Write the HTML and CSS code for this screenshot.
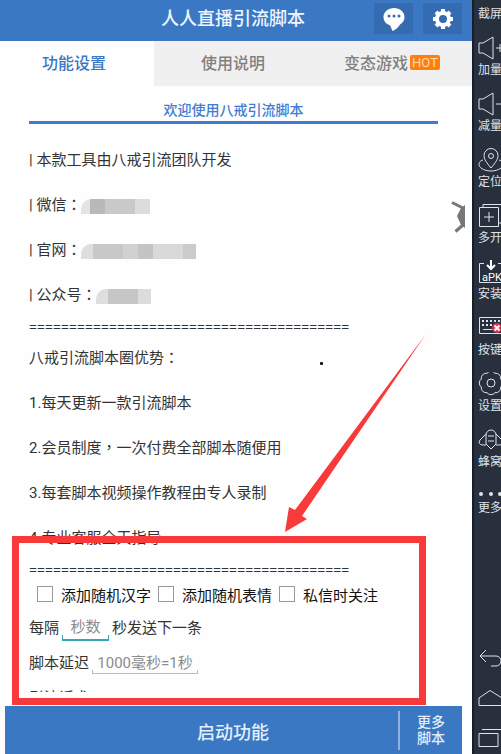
FILE: index.html
```html
<!DOCTYPE html>
<html lang="zh-CN">
	<head>
		<meta charset="utf-8">
		<title>人人直播引流脚本</title>
		<meta name="viewport" content="width=device-width, initial-scale=1.0"/>
		<link rel="stylesheet" href="styles.css">
	</head>
	<body>
		<section class="app">
			<header>
				<h1>人人直播引流脚本</h1>
				<div class="actions">
					<button aria-label="消息">
						<svg width="24" height="26" viewBox="0 0 24 26">
							<path d="M12 2C6 2 1.500 6 1.500 11c0 4 2.500 7 6.500 8.300L10.500 25c3-1 5.500-3.500 7.500-6.500 3-1.700 4.500-4.500 4.500-7.500C22.500 6 18 2 12 2z" fill="#fff"/>
							<g fill="#356bb0"><circle cx="7" cy="10" r="1.500"/><circle cx="12" cy="10" r="1.500"/><circle cx="17" cy="10" r="1.500"/></g>
						</svg>
					</button>
					<button aria-label="设置">
						<svg width="24" height="24" viewBox="-12 -12 24 24" stroke="#fff" fill="none">
							<circle r="6" stroke-width="4"/>
							<path d="M0-7v-3M0 7v3M7 0h3M-7 0h-3M5 5l2 2M-5-5l-2-2M5-5l2-2M-5 5l-2 2" stroke-width="4"/>
						</svg>
					</button>
				</div>
			</header>
			<nav class="tabs">
				<button class="active">功能设置</button>
				<button>使用说明</button>
				<button>变态游戏<span class="hot">HOT</span></button>
			</nav>
			<main>
				<h2>欢迎使用八戒引流脚本</h2>
				<p>| 本款工具由八戒引流团队开发</p>
				<p>| 微信<span class="punct" lang="zh-Hant">：</span><span class="mosaic wechat"></span></p>
				<p>| 官网<span class="punct" lang="zh-Hant">：</span><span class="mosaic site"></span></p>
				<p>| 公众号<span class="punct" lang="zh-Hant">：</span><span class="mosaic account"></span></p>
				<div class="rule">========================================</div>
				<p>八戒引流脚本圈优势<span class="punct" lang="zh-Hant">：</span></p>
				<p>1.每天更新一款引流脚本</p>
				<p>2.会员制度<span class="punct" lang="zh-Hant">，</span>一次付费全部脚本随便用</p>
				<p>3.每套脚本视频操作教程由专人录制</p>
				<p>4.专业客服全天指导</p>
				<div class="rule">========================================</div>
				<div class="checks">
					<label><input type="checkbox">添加随机汉字</label>
					<label><input type="checkbox">添加随机表情</label>
					<label><input type="checkbox">私信时关注</label>
				</div>
				<div class="field">
					<label for="seconds">每隔</label>
					<input id="seconds" class="short" type="text" placeholder="秒数">
					<span>秒发送下一条</span>
				</div>
				<div class="field">
					<label for="delay">脚本延迟</label>
					<input id="delay" class="long" type="text" placeholder="1000毫秒=1秒">
				</div>
				<div class="field">引流话术</div>
			</main>
			<footer>
				<button class="start">启动功能</button>
				<button class="more">更多<br>脚本</button>
			</footer>

			<svg class="floating" width="14" height="34" viewBox="0 0 14 34">
				<path d="M1 2.500l12 6M4.500 31.500l8-7" stroke="#777" stroke-width="3" fill="none"/>
				<path d="M14 5l-4 3-4 8 4 9 4 3z" fill="#777"/>
			</svg>
			<span class="pointer"></span>
			<svg class="arrow" width="142" height="200" viewBox="0 0 142 200">
				<path d="M0 198L4 173L10 176L141 0L17 182L22 185Z" fill="#f83a3a"/>
			</svg>
			<div class="highlight"></div>
		</section>

		<aside>
			<button>截屏</button>
			<button>
				<svg width="28" height="24"><path d="M1 7h4L15 1v22L5 17H1zM18 12h8M22 8v8"/></svg>
				加量
			</button>
			<button>
				<svg width="28" height="24"><path d="M1 7h4L15 1v22L5 17H1zM18 12h8"/></svg>
				减量
			</button>
			<button>
				<svg width="28" height="24"><path d="M13 20C8 14 6 11 6 7.500a7 7 0 0 1 14 0C20 11 18 14 13 20z"/><circle cx="13" cy="8" r="2.500"/><path d="M5 12C1 13 1 16 1 17c1 4 7 6 12 6s11-2 12-6c0-1 0-4-4-5"/></svg>
				定位
			</button>
			<button>
				<svg width="28" height="24"><path d="M1.500 3.500h19v19h-19zM5 3V.5h23M6 13h10M11 8v10M21 19h7"/></svg>
				多开
			</button>
			<button>
				<svg width="28" height="24"><path d="M6 3.500H1.500v19H28M20 3.500h8"/><path class="bold" d="M13 0v9M9 5l4 4 4-4"/><text x="4" y="21">aPK</text></svg>
				安装
			</button>
			<button>
				<svg width="28" height="24"><path d="M1.500 1.500h26v16h-26z"/><path class="keys" d="M4 5h22M4 9h22"/><path d="M5 13.500h12"/><circle class="alert" cx="19" cy="12" r="5"/><path class="bold" d="M16.500 9.500l5 5M21.500 9.500l-5 5"/></svg>
				按键
			</button>
			<button>
				<svg width="28" height="24"><path d="M22.700 7a5 5 0 0 1 0 8a5 5 0 0 1-5.700 5.700a5 5 0 0 1-8 0a5 5 0 0 1-5.700-5.700a5 5 0 0 1 0-8a5 5 0 0 1 5.700-5.700a5 5 0 0 1 8 0a5 5 0 0 1 5.700 5.700z"/><circle cx="13" cy="11" r="4"/></svg>
				设置
			</button>
			<button>
				<svg width="28" height="24"><path d="M8 7a5 5 0 0 1 10 0v9l-5 5-5-5zM10 8h6M10 13h6M8 6l-6 6c-2 3 0 5 3 5h3M18 6l6 6c2 3 0 5-3 5h-3"/></svg>
				蜂窝
			</button>
			<button>
				<svg width="28" height="14"><g class="dots"><circle cx="3" cy="10" r="2"/><circle cx="13" cy="10" r="2"/><circle cx="22" cy="10" r="2"/></g></svg>
				更多
			</button>
			<div class="keypad">
				<button aria-label="返回"><svg width="28" height="24"><path d="M8 4l-6 6 6 6M2 10h16a5 5 0 0 1 0 10h-5"/></svg></button>
				<button aria-label="主页"><svg width="28" height="24"><path d="M1 19.500V12l11-7.500L24 12v7.500z"/></svg></button>
				<button aria-label="最近"><svg width="28" height="24"><path d="M1 7.500h19v13H1zM4 3.500h22v17"/></svg></button>
			</div>
		</aside>
	</body>
</html>
```
FILE: styles.css
```css
* {
	box-sizing: border-box;
	margin: 0;
	padding: 0;
}
body {
	display: grid;
	grid-template-columns: 1fr 29px;
	height: 100vh;
	overflow: hidden;
	background: #fefefe;
	font-family: Roboto, 'Noto Sans CJK SC', sans-serif;
	color: #333;
}
button {
	border: none;
	background: none;
	font-family: inherit;
	color: inherit;
}

.app {
	position: relative;
	display: flex;
	flex-direction: column;
	min-width: 0;
	min-height: 0;
}

header {
	display: grid;
	grid-template-columns: 1fr auto 1fr;
	align-items: center;
	height: 41px;
	padding: 0 10px 4px 4px;
	background: #3b78c4;
	color: #eef5ff;
}
h1 {
	grid-column: 2;
	padding-bottom: 3px;
	font-size: 18px;
	font-weight: 500;
}
.actions {
	display: flex;
	justify-content: flex-end;
	gap: 10px;
}
.actions button {
	display: flex;
	align-items: center;
	justify-content: center;
	width: 39px;
	height: 31px;
	background: #356bb0;
}

.tabs {
	display: grid;
	grid-template-columns: 154fr 158fr 160fr;
	height: 45px;
}
.tabs button {
	display: flex;
	align-items: center;
	justify-content: center;
	gap: 2px;
	padding-bottom: 3px;
	font-size: 16px;
	font-weight: 500;
	color: #808080;
	background: #f0f0f0;
}
.tabs .active {
	padding-right: 6px;
	color: #3b78c4;
	background: #fefefe;
}
.hot {
	padding: 0 2px;
	border-radius: 2px;
	background: #ff7f0e;
	color: #ffdca8;
	font-size: 13px;
	font-weight: 400;
	line-height: 15px;
}

main {
	flex: 1;
	min-height: 0;
	overflow: hidden;
	margin: 0 34px 14px 29px;
	padding-top: 12px;
	font-size: 15px;
}
h2 {
	height: 26px;
	margin-bottom: 14px;
	border-bottom: 3px solid #427bd2;
	text-align: center;
	font-size: 14px;
	font-weight: 500;
	line-height: 24px;
	color: #427bd2;
}
p {
	height: 45px;
	line-height: 45px;
	white-space: nowrap;
}
.punct {
	font-family: 'Noto Sans CJK TC', sans-serif;
	line-height: 15px;
}
.mosaic {
	display: inline-block;
	height: 15px;
	border-radius: 10px 0 0 0;
	vertical-align: middle;
}
.wechat {
	width: 69px;
	background: linear-gradient(to right, #e4e4e4 9px, #b9b9b9 9px 24px, #c9c9c9 24px 54px, #dcdcdc 54px);
}
.site {
	width: 115px;
	background: linear-gradient(to right, #dedede 12px, #c8c8c8 12px 42px, #d1d1d1 42px 57px, #c4c4c4 57px 72px, #d9d9d9 72px 102px, #cbcbcb 102px);
}
.account {
	width: 55px;
	background: linear-gradient(to right, #dedede 12px, #c6c6c6 12px 42px, #dcdcdc 42px);
}
.rule {
	height: 18px;
	overflow: hidden;
	font-family: 'Open Sans', sans-serif;
	font-size: 14px;
	line-height: 18px;
}

.checks {
	display: flex;
	gap: 7px;
	height: 30px;
	padding-left: 8px;
	color: #111;
}
.checks label {
	display: flex;
	align-items: center;
	gap: 8px;
	white-space: nowrap;
}
.checks input {
	appearance: none;
	width: 16px;
	height: 16px;
	border: 1px solid #999;
}
.field {
	display: flex;
	align-items: center;
	gap: 3px;
	height: 35px;
}
.field input {
	height: 28px;
	padding-top: 3px;
	border: none;
	outline: none;
	background: none;
	text-align: center;
	font: inherit;
}
.field input::placeholder {
	color: #8c8c8c;
}
.field .short {
	width: 47px;
	border-bottom: 2px solid #3aa3b8;
	background: linear-gradient(#3aa3b8, #3aa3b8) 0 100% / 1px 4px no-repeat, linear-gradient(#3aa3b8, #3aa3b8) 100% 100% / 1px 4px no-repeat;
}
.field .long {
	width: 106px;
	height: 24px;
	border-bottom: 1px solid #bbb;
	background: linear-gradient(#bbb, #bbb) 0 100% / 1px 3px no-repeat, linear-gradient(#bbb, #bbb) 100% 100% / 1px 3px no-repeat;
}

footer {
	display: flex;
	align-items: center;
	height: 48px;
	margin: 0 10px 0 5px;
	background: #3b78c4;
	color: #e3eefc;
}
.start {
	flex: 1;
	height: 100%;
	padding: 2px 0 0 63px;
	font-size: 18px;
	font-weight: 500;
}
.more {
	width: 64px;
	height: 39px;
	border-left: 2px solid #8fb2e0;
	font-size: 14px;
	font-weight: 500;
	line-height: 16px;
}

.floating {
	position: absolute;
	top: 200px;
	right: 7px;
}
.pointer {
	position: absolute;
	top: 362px;
	left: 320px;
	width: 3px;
	height: 3px;
	border-radius: 1px;
	background: #111;
}
.arrow {
	position: absolute;
	bottom: 220px;
	right: 45px;
}
.highlight {
	position: absolute;
	left: 12px;
	right: 46px;
	bottom: 49px;
	height: 169px;
	border: 7px solid #f83a3a;
}

aside {
	display: flex;
	flex-direction: column;
	gap: 12px;
	min-height: 0;
	overflow: hidden;
	padding: 4px 0 4px 4px;
	border-left: 2px solid #171e2b;
	background: #28303e;
	color: #dfe3e8;
}
aside button {
	flex: none;
	width: 28px;
	text-align: left;
	font-size: 12px;
	line-height: 20px;
	white-space: nowrap;
}
aside svg {
	display: block;
	fill: none;
	stroke: #dfe3e8;
}
aside text {
	fill: #fff;
	stroke: none;
	font-size: 11px;
}
.bold {
	stroke: #fff;
	stroke-width: 2;
}
.keys {
	stroke-width: 2;
	stroke-dasharray: 2 2;
}
.alert {
	fill: #e0304e;
	stroke: none;
}
.dots {
	fill: #dfe3e8;
	stroke: none;
}
.keypad {
	display: grid;
	gap: 16px;
	margin-top: auto;
}
```
